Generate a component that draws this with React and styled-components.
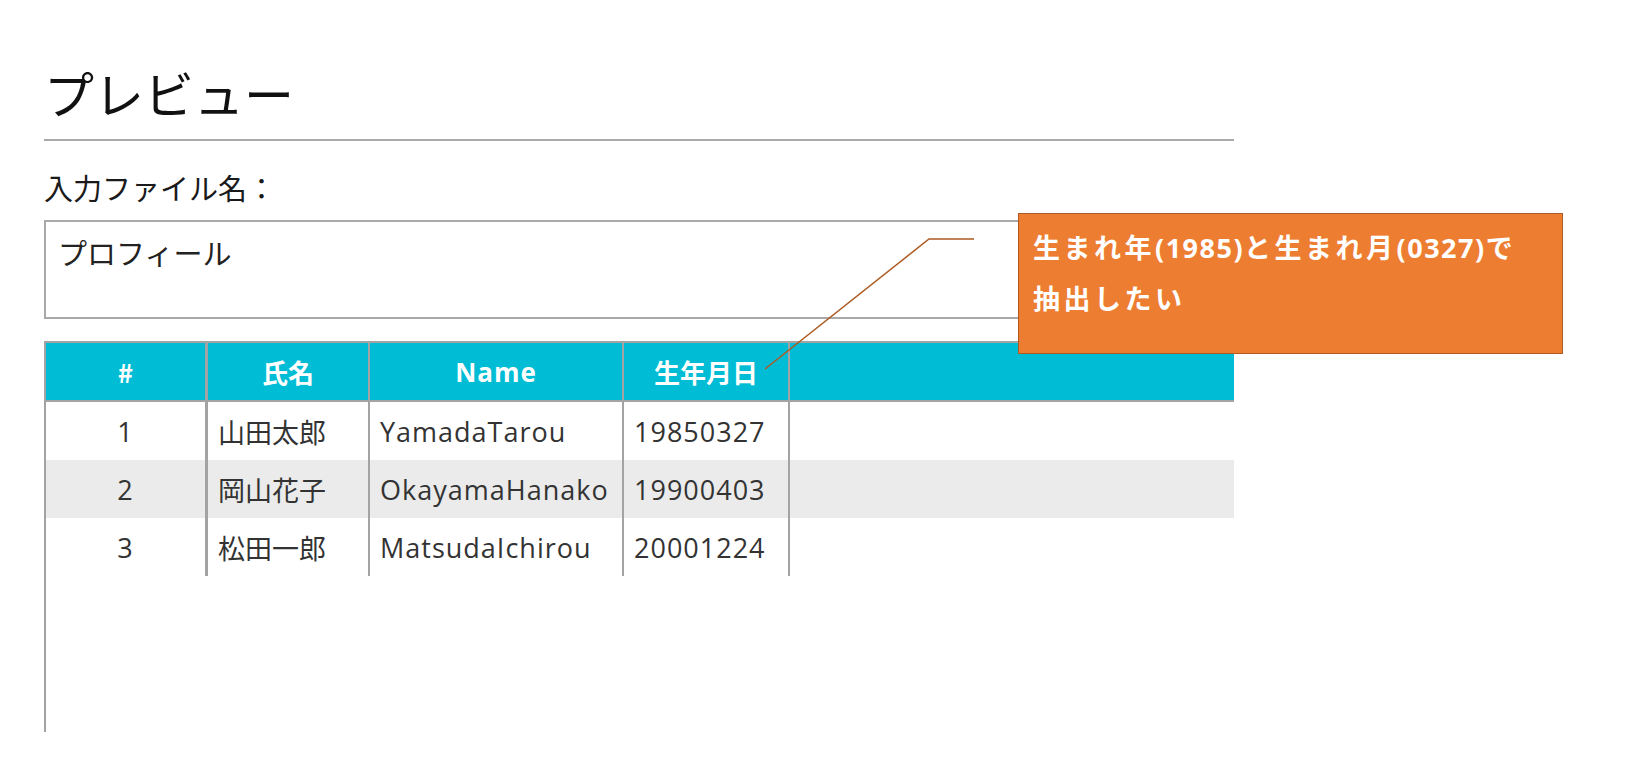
import React from "react";
import styled, { createGlobalStyle } from "styled-components";

const GlobalStyle = createGlobalStyle`
	html, body {
		margin: 0;
		padding: 0;
		background: #fff;
	}
	body {
		font-family: "Noto Sans CJK JP", sans-serif;
		color: #222;
	}
`;

const rows = [
	{ no: 1, kanji: "山田太郎", name: "YamadaTarou", birth: "19850327" },
	{ no: 2, kanji: "岡山花子", name: "OkayamaHanako", birth: "19900403" },
	{ no: 3, kanji: "松田一郎", name: "MatsudaIchirou", birth: "20001224" },
];

const App = () => {
	return (
		<>
			<GlobalStyle />
			<Page>
				<Title>プレビュー</Title>
				<Label>入力ファイル名：</Label>
				<FileBox>プロフィール</FileBox>

				<TableWrap>
					<Table>
						<thead>
							<tr>
								<HeadCell w={162} thick>
									#
								</HeadCell>
								<HeadCell w={162}>氏名</HeadCell>
								<HeadCell w={254} latin>
									Name
								</HeadCell>
								<HeadCell w={166}>生年月日</HeadCell>
								<HeadCell last />
							</tr>
						</thead>
						<tbody>
							{rows.map((r) => (
								<Row key={r.no}>
									<Cell center thick latin>
										{r.no}
									</Cell>
									<Cell>{r.kanji}</Cell>
									<Cell latin>{r.name}</Cell>
									<Cell latin>{r.birth}</Cell>
									<Cell last />
								</Row>
							))}
						</tbody>
					</Table>
				</TableWrap>

				{/* callout shape laid over the page */}
				<Leader width="220" height="140" viewBox="0 0 220 140">
					<polyline
						points="5,135 169,5 214,5"
						fill="none"
						stroke="#ae5a21"
						strokeWidth="1.5"
					/>
				</Leader>
				<Callout>
					生まれ年<Num>(1985)</Num>と生まれ月<Num>(0327)</Num>で
					<br />
					抽出したい
				</Callout>
			</Page>
		</>
	);
};

const Page = styled.div`
	position: relative;
	width: 1190px;
	padding: 60px 0 0 44px;
	min-height: 764px;
	box-sizing: border-box;
`;

const Title = styled.h1`
	margin: 0;
	padding-bottom: 14px;
	border-bottom: 2px solid #a9a9a9;
	font-size: 50px;
	font-weight: 400;
	line-height: 65px;
	color: #111;
	width: 1190px;
`;

const Label = styled.div`
	margin-top: 26px;
	font-size: 29px;
	line-height: 40px;
	color: #1a1a1a;
`;

const FileBox = styled.div`
	margin-top: 13px;
	width: 1190px;
	height: 99px;
	box-sizing: border-box;
	border: 2px solid #a9a9a9;
	padding: 10px 12px;
	font-size: 29px;
	line-height: 40px;
	color: #222;
`;

const TableWrap = styled.div`
	margin-top: 22px;
	width: 1190px;
	height: 391px;
	box-sizing: border-box;
	border-left: 2px solid #a3a3a3;
`;

const Table = styled.table`
	width: 100%;
	table-layout: fixed;
	border-collapse: separate;
	border-spacing: 0;
`;

const HeadCell = styled.th`
	box-sizing: border-box;
	width: ${(p) => (p.w ? `${p.w}px` : "auto")};
	height: 61px;
	padding: 0;
	background: #00bcd4;
	color: #fff;
	font-family: ${(p) =>
		p.latin ? `"Open Sans", "Noto Sans CJK JP", sans-serif` : `"Noto Sans CJK JP", sans-serif`};
	font-size: 26px;
	font-weight: 700;
	letter-spacing: ${(p) => (p.latin ? "1px" : "0")};
	text-align: center;
	border-top: 2px solid #a3a3a3;
	border-bottom: 2px solid #a3a3a3;
	border-right: ${(p) => (p.last ? "none" : p.thick ? "3px solid #a3a3a3" : "2px solid #a3a3a3")};
`;

const Row = styled.tr`
	&:nth-child(even) td {
		background: #ebebeb;
	}
`;

const Cell = styled.td`
	box-sizing: border-box;
	height: 58px;
	padding: 0 10px;
	font-family: ${(p) =>
		p.latin ? `"Open Sans", "Noto Sans CJK JP", sans-serif` : `"Noto Sans CJK JP", sans-serif`};
	font-size: 27px;
	letter-spacing: ${(p) => (p.latin ? "1px" : "0")};
	color: #333;
	text-align: ${(p) => (p.center ? "center" : "left")};
	white-space: nowrap;
	border-right: ${(p) => (p.last ? "none" : p.thick ? "3px solid #a3a3a3" : "2px solid #a3a3a3")};
`;

const Leader = styled.svg`
	position: absolute;
	left: 760px;
	top: 234px;
	overflow: visible;
`;

const Callout = styled.div`
	position: absolute;
	left: 1018px;
	top: 213px;
	width: 545px;
	height: 141px;
	box-sizing: border-box;
	padding: 8px 14px 0;
	background: #ed7d31;
	border: 1.5px solid #ae5a21;
	color: #fff;
	font-family: "Noto Sans CJK JP", sans-serif;
	font-weight: 700;
	font-size: 27px;
	line-height: 50px;
	letter-spacing: 3.5px;
	white-space: nowrap;
`;

const Num = styled.span`
	font-family: "Open Sans", sans-serif;
	letter-spacing: 1.5px;
`;

export default App;
